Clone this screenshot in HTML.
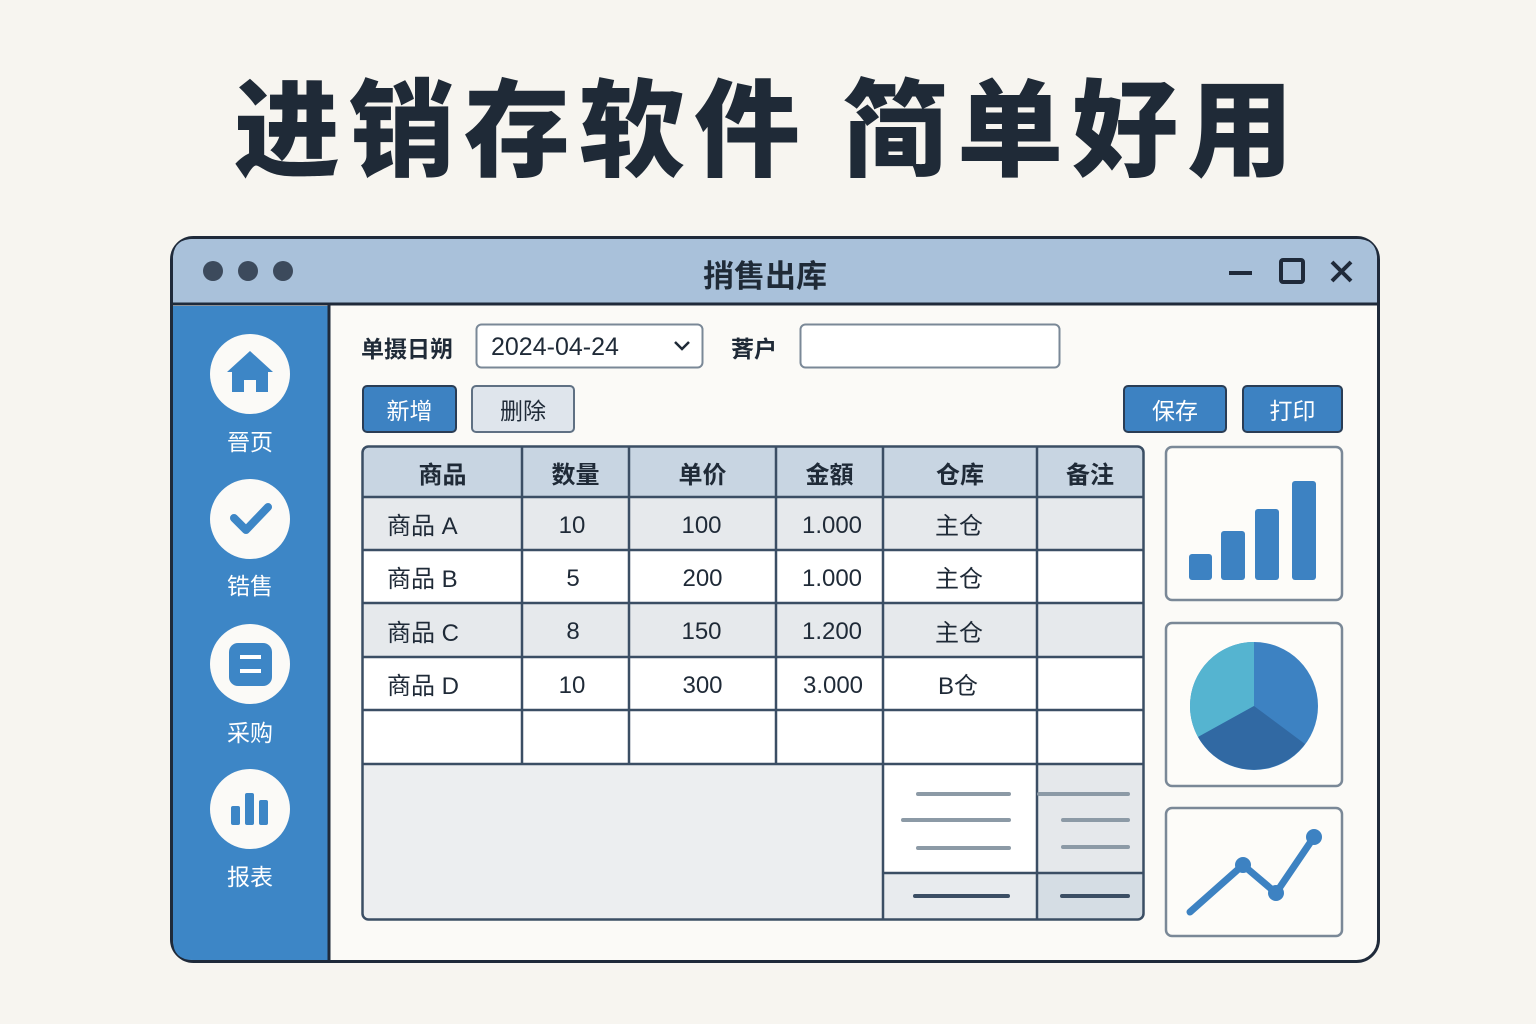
<!DOCTYPE html>
<html><head><meta charset="utf-8"><style>
*{margin:0;padding:0;box-sizing:border-box}
body{width:1536px;height:1024px;background:#f7f5f0;position:relative;overflow:hidden;font-family:"Liberation Sans","Noto Sans CJK SC",sans-serif;color:#1f2a37}
.a{position:absolute}
.t{position:absolute;display:flex;align-items:center;justify-content:center}
h1{position:absolute;left:0;width:1536px;top:57px;text-align:center;font-size:106px;font-weight:800;letter-spacing:9px;color:#1f2a37;font-family:"Noto Sans CJK SC",sans-serif;line-height:130px}
.btn{position:absolute;border:2px solid #2a3d55;border-radius:5px;display:flex;align-items:center;justify-content:center;font-size:23px}
.blue{background:#3d82c2;color:#fff}
.cell{position:absolute;display:flex;align-items:center;font-size:24px;color:#1f2a37}
.n{padding-top:4px}
</style></head><body>
<h1>进销存软件&nbsp;简单好用</h1>
<svg class="a" style="left:0;top:0" width="1536" height="1024">
<rect x="171.5" y="237.5" width="1207" height="724" rx="22" fill="#fbfaf7" stroke="#1f2a3a" stroke-width="3"/>
<path d="M173 303 V259 Q173 239 193 239 H1357 Q1377 239 1377 259 V303 Z" fill="#a9c1da"/>
<line x1="172" y1="304" x2="1378" y2="304" stroke="#1f2a3a" stroke-width="3"/>
<path d="M173 306 H328 V960 H193 Q173 960 173 940 Z" fill="#3d86c6"/>
<line x1="329" y1="305" x2="329" y2="961" stroke="#1f2a3a" stroke-width="3"/>
<circle cx="213" cy="271" r="10" fill="#3c4a5c"/><circle cx="248" cy="271" r="10" fill="#3c4a5c"/><circle cx="283" cy="271" r="10" fill="#3c4a5c"/>
<line x1="1229" y1="273" x2="1252" y2="273" stroke="#1f2a3a" stroke-width="4"/>
<rect x="1281" y="260" width="22" height="22" rx="2" fill="none" stroke="#1f2a3a" stroke-width="4"/>
<path d="M1332 262 L1351 281 M1351 262 L1332 281" stroke="#1f2a3a" stroke-width="4"/>
<g fill="#fbfaf7"><circle cx="250" cy="374" r="40"/><circle cx="250" cy="519" r="40"/><circle cx="250" cy="664" r="40"/><circle cx="250" cy="809" r="40"/></g>
<path d="M227 372 L250 351 L273 372 L268 372 L268 392 L256 392 L256 380 L244 380 L244 392 L232 392 L232 372 Z" fill="#3d86c6"/>
<path d="M234 518 L246 530 L268 507" fill="none" stroke="#3d86c6" stroke-width="8" stroke-linecap="round" stroke-linejoin="round"/>
<rect x="229" y="643" width="43" height="43" rx="9" fill="#3d86c6"/>
<line x1="240" y1="657" x2="261" y2="657" stroke="#fff" stroke-width="4"/><line x1="240" y1="671" x2="261" y2="671" stroke="#fff" stroke-width="4"/>
<g fill="#3d86c6"><rect x="231" y="806" width="9" height="19" rx="2"/><rect x="245" y="793" width="9" height="32" rx="2"/><rect x="259" y="800" width="9" height="25" rx="2"/></g>
<rect x="476.5" y="324.5" width="226" height="43" rx="5" fill="#fff" stroke="#7a8897" stroke-width="2"/>
<path d="M675 342 L682 349 L689 342" fill="none" stroke="#1f2a37" stroke-width="2.5"/>
<rect x="800.5" y="324.5" width="259" height="43" rx="5" fill="#fff" stroke="#7a8897" stroke-width="2"/>
<rect x="363" y="447" width="780" height="472" rx="6" fill="#fff"/>
<rect x="363" y="447" width="780" height="50" fill="#c8d5e2"/>
<rect x="363" y="497" width="780" height="53" fill="#e6e9ec"/>
<rect x="363" y="603" width="780" height="54" fill="#e6e9ec"/>
<rect x="363" y="764" width="520" height="155" fill="#eceef0"/>
<rect x="1037" y="764" width="106" height="109" fill="#e5e8eb"/>
<rect x="883" y="873" width="154" height="46" fill="#e8ebee"/>
<rect x="1037" y="873" width="106" height="46" fill="#d5dde4"/>
<g stroke="#3b4e64" stroke-width="2.5" fill="none">
<rect x="362.5" y="446.5" width="781" height="473" rx="6"/>
<line x1="363" y1="497" x2="1143" y2="497"/><line x1="363" y1="550" x2="1143" y2="550"/><line x1="363" y1="603" x2="1143" y2="603"/><line x1="363" y1="657" x2="1143" y2="657"/><line x1="363" y1="710" x2="1143" y2="710"/><line x1="363" y1="764" x2="1143" y2="764"/>
<line x1="522" y1="447" x2="522" y2="764"/><line x1="629" y1="447" x2="629" y2="764"/><line x1="776" y1="447" x2="776" y2="764"/><line x1="883" y1="447" x2="883" y2="919"/><line x1="1037" y1="447" x2="1037" y2="919"/>
<line x1="883" y1="873" x2="1143" y2="873"/>
</g>
<g stroke-linecap="round" stroke-width="4">
<g stroke="#8c9aa6"><line x1="918" y1="794" x2="1009" y2="794"/><line x1="903" y1="820" x2="1009" y2="820"/><line x1="918" y1="848" x2="1009" y2="848"/><line x1="1039" y1="794" x2="1128" y2="794"/><line x1="1063" y1="820" x2="1128" y2="820"/><line x1="1063" y1="847" x2="1128" y2="847"/></g>
<g stroke="#3b4e64"><line x1="915" y1="896" x2="1008" y2="896"/><line x1="1062" y1="896" x2="1128" y2="896"/></g>
</g>
<g fill="#fdfcf9" stroke="#7a8897" stroke-width="2.5">
<rect x="1166" y="447" width="176" height="153" rx="6"/><rect x="1166" y="623" width="176" height="163" rx="6"/><rect x="1166" y="808" width="176" height="128" rx="6"/>
</g>
<g fill="#3d82c2"><rect x="1189" y="554" width="23" height="26" rx="3"/><rect x="1221" y="531" width="24" height="49" rx="3"/><rect x="1255" y="509" width="24" height="71" rx="3"/><rect x="1292" y="481" width="24" height="99" rx="3"/></g>
<circle cx="1254" cy="706" r="64" fill="#3d82c2"/>
<path d="M1254 706 L1254 642 A64 64 0 0 0 1198 737 Z" fill="#55b4d0"/>
<path d="M1254 706 L1198 737 A64 64 0 0 0 1305 744 Z" fill="#3169a3"/>
<polyline points="1190,912 1243,865 1276,893 1314,837" fill="none" stroke="#3d82c2" stroke-width="7" stroke-linecap="round" stroke-linejoin="round"/>
<g fill="#3d82c2"><circle cx="1243" cy="865" r="8"/><circle cx="1276" cy="893" r="8"/><circle cx="1314" cy="837" r="8"/></g>
</svg>
<div class="t" style="left:550px;top:250px;width:430px;height:46px;font-size:31px;font-weight:bold">捎售出库</div>
<div class="t" style="left:200px;top:424px;width:100px;height:32px;color:#fff;font-size:23px">晉页</div>
<div class="t" style="left:200px;top:568px;width:100px;height:32px;color:#fff;font-size:23px">锆售</div>
<div class="t" style="left:200px;top:715px;width:100px;height:32px;color:#fff;font-size:23px">采购</div>
<div class="t" style="left:200px;top:859px;width:100px;height:32px;color:#fff;font-size:23px">报表</div>
<div class="a" style="left:361px;top:330px;font-size:23px;font-weight:bold">单摄日朔</div>
<div class="a" style="left:491px;top:333px;font-size:25px">2024-04-24</div>
<div class="a" style="left:731px;top:330px;font-size:23px;font-weight:bold">萕户</div>
<div class="btn blue" style="left:362px;top:385px;width:95px;height:48px">新增</div>
<div class="btn" style="left:471px;top:385px;width:104px;height:48px;background:#dfe5ec;border-color:#5f7083">删除</div>
<div class="btn blue" style="left:1123px;top:385px;width:104px;height:48px">保存</div>
<div class="btn blue" style="left:1242px;top:385px;width:101px;height:48px">打印</div>
<div class="cell" style="left:363px;top:447px;width:159px;height:50px;justify-content:center;font-weight:bold">商品</div>
<div class="cell" style="left:522px;top:447px;width:107px;height:50px;justify-content:center;font-weight:bold">数量</div>
<div class="cell" style="left:629px;top:447px;width:147px;height:50px;justify-content:center;font-weight:bold">单价</div>
<div class="cell" style="left:776px;top:447px;width:107px;height:50px;justify-content:center;font-weight:bold">金額</div>
<div class="cell" style="left:883px;top:447px;width:154px;height:50px;justify-content:center;font-weight:bold">仓库</div>
<div class="cell" style="left:1037px;top:447px;width:106px;height:50px;justify-content:center;font-weight:bold">备注</div>
<div class="cell" style="left:387px;top:497px;height:53px">商品 A</div><div class="cell n" style="left:522px;top:497px;width:100px;height:53px;justify-content:center">10</div><div class="cell n" style="left:629px;top:497px;width:145px;height:53px;justify-content:center">100</div><div class="cell n" style="left:776px;top:497px;width:112px;height:53px;justify-content:center">1.000</div><div class="cell" style="left:883px;top:497px;width:152px;height:53px;justify-content:center">主仓</div>
<div class="cell" style="left:387px;top:550px;height:53px">商品 B</div><div class="cell n" style="left:522px;top:550px;width:102px;height:53px;justify-content:center">5</div><div class="cell n" style="left:629px;top:550px;width:147px;height:53px;justify-content:center">200</div><div class="cell n" style="left:776px;top:550px;width:112px;height:53px;justify-content:center">1.000</div><div class="cell" style="left:883px;top:550px;width:152px;height:53px;justify-content:center">主仓</div>
<div class="cell" style="left:387px;top:603px;height:54px">商品 C</div><div class="cell n" style="left:522px;top:603px;width:102px;height:54px;justify-content:center">8</div><div class="cell n" style="left:629px;top:603px;width:145px;height:54px;justify-content:center">150</div><div class="cell n" style="left:776px;top:603px;width:112px;height:54px;justify-content:center">1.200</div><div class="cell" style="left:883px;top:603px;width:152px;height:54px;justify-content:center">主仓</div>
<div class="cell" style="left:387px;top:657px;height:53px">商品 D</div><div class="cell n" style="left:522px;top:657px;width:100px;height:53px;justify-content:center">10</div><div class="cell n" style="left:629px;top:657px;width:147px;height:53px;justify-content:center">300</div><div class="cell n" style="left:776px;top:657px;width:114px;height:53px;justify-content:center">3.000</div><div class="cell" style="left:883px;top:657px;width:150px;height:53px;justify-content:center">B仓</div>
</body></html>
